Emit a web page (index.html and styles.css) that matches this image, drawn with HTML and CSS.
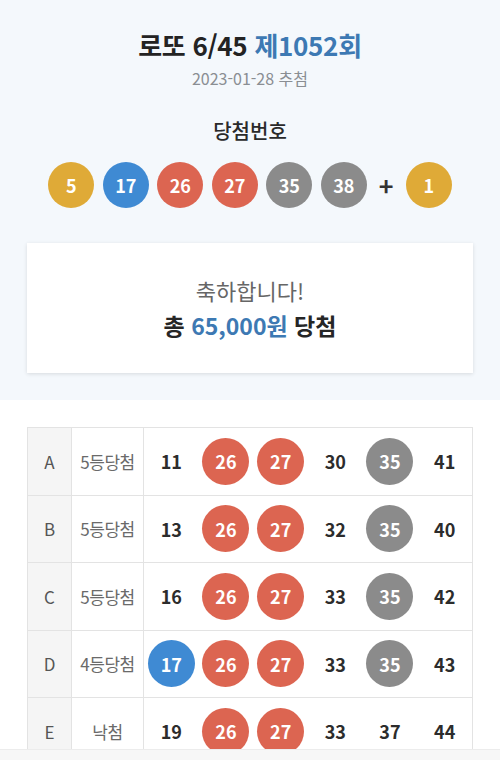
FILE: index.html
```html
<!DOCTYPE html>
<html lang="ko">
<head>
  <meta charset="UTF-8" />
  <meta name="viewport" content="width=device-width, initial-scale=1.0"/>
  <title>로또 6/45 제1052회</title>
  <link rel="stylesheet" href="styles.css">
</head>
<body>
  <div class="top">
    <h1>로또 6/45 <span class="blue">제1052회</span></h1>
    <p class="date">2023-01-28 추첨</p>
    <h2>당첨번호</h2>
    <div class="balls">
      <span class="ball yellow">5</span>
      <span class="ball blue-ball">17</span>
      <span class="ball red">26</span>
      <span class="ball red">27</span>
      <span class="ball gray">35</span>
      <span class="ball gray">38</span>
      <span class="plus">+</span>
      <span class="ball yellow">1</span>
    </div>
    <div class="card">
      <p class="congrats">축하합니다!</p>
      <p class="prize">총 <span class="blue">65,000원</span> 당첨</p>
    </div>
  </div>

  <div class="result">
    <div class="row">
      <div class="letter">A</div>
      <div class="rank">5등당첨</div>
      <div class="num">11</div>
      <div class="num"><span class="ball red">26</span></div>
      <div class="num"><span class="ball red">27</span></div>
      <div class="num">30</div>
      <div class="num"><span class="ball gray">35</span></div>
      <div class="num">41</div>
    </div>
    <div class="row">
      <div class="letter">B</div>
      <div class="rank">5등당첨</div>
      <div class="num">13</div>
      <div class="num"><span class="ball red">26</span></div>
      <div class="num"><span class="ball red">27</span></div>
      <div class="num">32</div>
      <div class="num"><span class="ball gray">35</span></div>
      <div class="num">40</div>
    </div>
    <div class="row">
      <div class="letter">C</div>
      <div class="rank">5등당첨</div>
      <div class="num">16</div>
      <div class="num"><span class="ball red">26</span></div>
      <div class="num"><span class="ball red">27</span></div>
      <div class="num">33</div>
      <div class="num"><span class="ball gray">35</span></div>
      <div class="num">42</div>
    </div>
    <div class="row">
      <div class="letter">D</div>
      <div class="rank">4등당첨</div>
      <div class="num"><span class="ball blue-ball">17</span></div>
      <div class="num"><span class="ball red">26</span></div>
      <div class="num"><span class="ball red">27</span></div>
      <div class="num">33</div>
      <div class="num"><span class="ball gray">35</span></div>
      <div class="num">43</div>
    </div>
    <div class="row">
      <div class="letter">E</div>
      <div class="rank">낙첨</div>
      <div class="num">19</div>
      <div class="num"><span class="ball red">26</span></div>
      <div class="num"><span class="ball red">27</span></div>
      <div class="num">33</div>
      <div class="num">37</div>
      <div class="num">44</div>
    </div>
  </div>

  <div class="bottom-bar"></div>
</body>
</html>
```

FILE: styles.css
```css
body {
  margin: 0;
  padding: 0;
  background-color: white;
  color: #222;
  font-family: 'Noto Sans CJK KR', 'Noto Sans', sans-serif;
  text-align: center;
  overflow: hidden;
  height: 760px;
}

p, h1, h2 {
  margin: 0;
}

.blue {
  color: #3d79b3;
}

.top {
  background-color: #f4f8fc;
  padding: 29px 27px 27px;
}

h1 {
  font-size: 26px;
  line-height: 32px;
  font-weight: bold;
  color: #232323;
  letter-spacing: -0.3px;
}

.date {
  margin-top: 7px;
  font-size: 16px;
  line-height: 20px;
  color: #8a8e93;
}

h2 {
  margin-top: 31px;
  font-size: 20px;
  line-height: 24px;
  font-weight: 500;
  color: #2a2a2a;
}

.balls {
  margin-top: 19px;
  display: flex;
  justify-content: center;
  align-items: center;
  gap: 8.5px;
}

.ball {
  display: inline-flex;
  align-items: center;
  justify-content: center;
  width: 46px;
  height: 46px;
  border-radius: 50%;
  color: white;
  font-size: 18px;
  font-weight: bold;
}

.yellow { background-color: #dfaa37; }
.blue-ball { background-color: #3f8ad3; }
.red { background-color: #dc6551; }
.gray { background-color: #8b8b8b; }

.plus {
  width: 22px;
  font-size: 25px;
  font-weight: bold;
  color: #333;
  line-height: 1;
}

.card {
  margin-top: 35px;
  background-color: white;
  box-shadow: 0 1px 4px rgba(0, 0, 0, 0.12);
  padding: 33px 0;
}

.congrats {
  font-size: 22px;
  line-height: 28px;
  color: #666;
}

.prize {
  margin-top: 6px;
  font-size: 23px;
  line-height: 30px;
  font-weight: bold;
  color: #262626;
}

.result {
  margin: 27px 27px 0;
  border: 1px solid #e3e3e3;
  border-bottom: none;
}

.row {
  display: grid;
  grid-template-columns: 44px 72px repeat(6, 1fr);
  height: 66.5px;
  border-bottom: 1px solid #e3e3e3;
}

.row > div {
  display: flex;
  align-items: center;
  justify-content: center;
}

.letter {
  background-color: #f5f5f5;
  border-right: 1px solid #e3e3e3;
  font-size: 17px;
  color: #555;
}

.rank {
  border-right: 1px solid #e3e3e3;
  font-size: 17px;
  color: #6a6a6a;
  letter-spacing: -0.5px;
}

.num {
  font-size: 18px;
  font-weight: bold;
  color: #2c2c2c;
}

.num .ball {
  width: 47px;
  height: 47px;
}

.bottom-bar {
  position: fixed;
  left: 0;
  right: 0;
  bottom: 0;
  height: 10px;
  background-color: #f7f7f7;
  border-top: 1px solid #ececec;
}
```
